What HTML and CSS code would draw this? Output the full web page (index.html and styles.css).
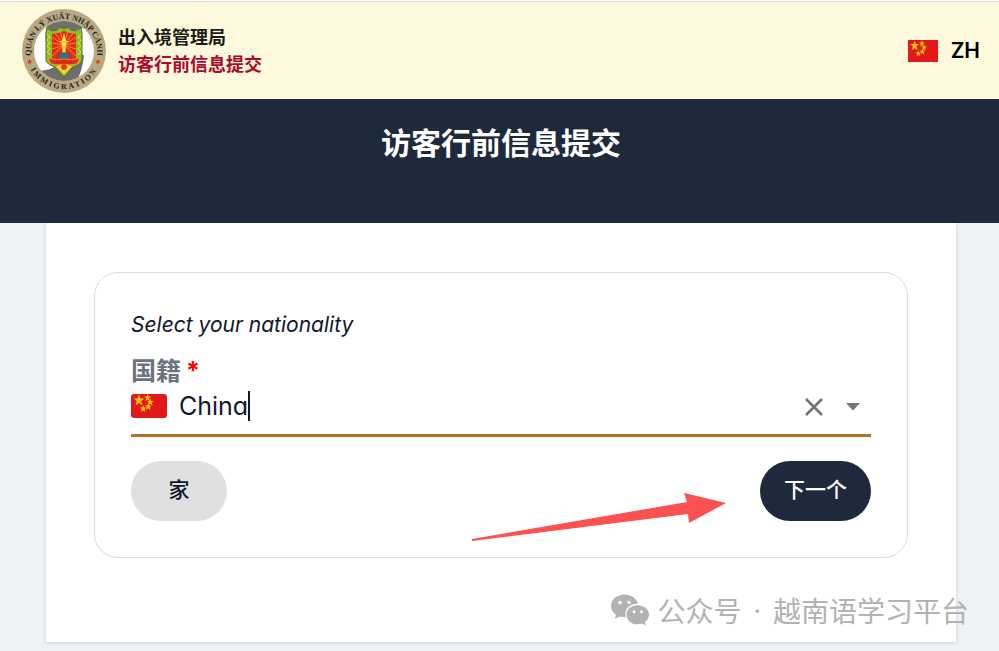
FILE: index.html
```html
<!DOCTYPE html>
<html lang="zh">
<head>
    <meta charset="UTF-8">
    <meta name="viewport" content="width=device-width, initial-scale=1">
    <title>访客行前信息提交</title>
    <link rel="stylesheet" href="styles.css">
</head>
<body>
    <!-- shared flag drawing -->
    <svg class="sprite" aria-hidden="true">
        <symbol id="flag" viewBox="0 0 36 24" preserveAspectRatio="none">
            <rect width="36" height="24" fill="#e2191a"/>
            <g fill="#ffc60a">
                <path id="star" d="M8 0.5 L9.4 4.4 L13.4 4.4 L10.2 6.9 L11.5 11.4 L8 8.8 L4.5 11.4 L5.8 6.9 L2.6 4.4 L6.6 4.4 Z"/>
                <use href="#star" transform="translate(11.6 -0.2) scale(.64)"/>
                <use href="#star" transform="translate(14.2 4.2) scale(.64)"/>
                <use href="#star" transform="translate(12.2 8.6) scale(.64)"/>
                <use href="#star" transform="translate(7.2 10.8) scale(.64)"/>
            </g>
        </symbol>
    </svg>

    <header class="topbar">
        <a class="brand" href="#">
            <svg class="logo" viewBox="0 0 84 84" aria-hidden="true">
                <defs>
                    <path id="arcTop" d="M10 52 A33.2 33.2 0 1 1 74 52"/>
                    <path id="arcBottom" d="M5 52 A38.4 38.4 0 0 0 79 52"/>
                    <path id="shield" d="M24 24 L25 19 L30 22 Q36 22 38 18 Q42 21 46 18 Q48 22 54 22 L59 19 L60 24 V52 Q58 56 51 58 L42 68 L33 58 Q26 56 24 52 Z"/>
                    <clipPath id="disc"><circle cx="42" cy="42" r="30"/></clipPath>
                </defs>
                <circle cx="42" cy="42" r="42" fill="#b9a981"/>
                <circle cx="42" cy="42" r="30" fill="#fff"/>
                <g clip-path="url(#disc)" fill="#6f6e6c">
                    <path d="M24 34 Q22 20 28 10 H56 L61 19 Q50 20 42 32 Z"/>
                    <path d="M18 62 Q37 60 42 48 L62 46 Q60 66 52 75 H34 Z"/>
                </g>
                <use href="#shield" fill="#8fbe22" stroke="#4d7a24" stroke-width="1"/>
                <path d="M30 25 L36 24 L42 22 L48 24 L54 25 V50 Q52 56 42 62 Q32 56 30 50 Z" fill="#e32a1c"/>
                <path d="M42 36 L30 28 M42 36 L33 24 M42 36 L38 22 M42 36 L46 22 M42 36 L51 24 M42 36 L54 28 M42 36 L54 34 M42 36 L54 40 M42 36 L54 47 M42 36 L30 34 M42 36 L30 40 M42 36 L30 47" stroke="#ffa52a" stroke-width="0.8"/>
                <path d="M42 24 L44 31 L43.5 48 H40.5 L40 31 Z" fill="#ffe44d"/>
                <path d="M37 32 H47 L43 35 H41 Z" fill="#ffd02a"/>
                <path d="M34 47 L42 43 L50 47 L47 49 H37 Z" fill="#376d81"/>
                <path d="M26 49 Q34 52 42 50 Q50 52 58 49 L55 55 Q42 58 29 55 Z" fill="#dc2b20" stroke="#f0a629" stroke-width="0.8"/>
                <path d="M34 57 Q42 53 50 57 L42 66 Z" fill="#f2d72c"/>
                <circle cx="42" cy="58" r="3" fill="#e53a20"/>
                <path d="M25 25 L28 28 L25 31 L28 34 L25 37 L28 40 L25 43 L28 46 M59 25 L56 28 L59 31 L56 34 L59 37 L56 40 L59 43 L56 46" fill="none" stroke="#e8e23a" stroke-width="1"/>
                <g fill="#e03125">
                    <use href="#star" transform="translate(3.6 49.6) scale(.5)"/>
                    <use href="#star" transform="translate(72 49.6) scale(.5)"/>
                </g>
                <text class="logo-text"><textPath href="#arcTop" startOffset="50%" text-anchor="middle">QUẢN LÝ XUẤT NHẬP CẢNH</textPath></text>
                <text class="logo-text wide"><textPath href="#arcBottom" startOffset="50%" text-anchor="middle">IMMIGRATION</textPath></text>
            </svg>
            <span class="brand-text">
                <span>出入境管理局</span>
                <span class="brand-sub">访客行前信息提交</span>
            </span>
        </a>
        <button type="button" class="lang">
            <svg class="lang-flag" aria-hidden="true"><use href="#flag"/></svg>
            ZH
        </button>
    </header>

    <section class="banner">
        <h1>访客行前信息提交</h1>
    </section>

    <main class="panel">
        <form class="card">
            <p class="hint">Select your nationality</p>
            <label class="label" for="nationality">国籍<span class="required">*</span></label>
            <div class="field">
                <svg class="field-flag" aria-hidden="true"><use href="#flag"/></svg>
                <input id="nationality" type="text" value="China" autocomplete="off">
                <span class="caret"></span>
                <div class="field-actions">
                    <button type="button" aria-label="Clear">
                        <svg width="20" height="20" viewBox="0 0 20 20"><path d="M2 2 L18 18 M18 2 L2 18" stroke="#757575" stroke-width="2.6"/></svg>
                    </button>
                    <button type="button" aria-label="Open">
                        <svg width="16" height="8" viewBox="0 0 16 8"><path d="M1 0 H15 L8 7.5 Z" fill="#757575"/></svg>
                    </button>
                </div>
            </div>
            <div class="actions">
                <button type="button" class="btn btn-home">家</button>
                <button type="button" class="btn btn-next">下一个</button>
            </div>
            <svg class="arrow" viewBox="0 0 256 50" aria-hidden="true">
                <path d="M1 47 L216 10 L213 1 L255 11 L218 31 L217 22 L1 49 Z" fill="#fa5151"/>
            </svg>
        </form>
    </main>

    <div class="watermark">
        <svg width="38" height="32" viewBox="0 0 38 32" aria-hidden="true">
            <path d="M13.5 0.5 C6 0.5 0 5.5 0 12 C0 15.5 2 18.7 5 20.9 L3.8 25 L8.5 22.5 Q12 23.5 14.7 23.2 C12.8 15 19 9.5 27 9.8 C25.5 4.2 20 0.5 13.5 0.5 Z" fill="#b2b2b2"/>
            <path d="M26.5 11.2 C20 11.2 15.5 15.5 15.5 20.7 C15.5 26.5 20.5 30.3 26.5 30.3 Q29 30.3 31 29.5 L34.8 31.5 L33.9 28 C36.5 26.2 38 23.5 38 20.7 C38 15.5 33 11.2 26.5 11.2 Z" fill="#b2b2b2"/>
            <g fill="#fff">
                <circle cx="9" cy="8.5" r="1.8"/>
                <circle cx="18" cy="8.5" r="1.8"/>
                <circle cx="23" cy="17.8" r="1.5"/>
                <circle cx="30.5" cy="17.8" r="1.5"/>
            </g>
        </svg>
        <span>公众号</span>
        <span class="dot">·</span>
        <span>越南语学习平台</span>
    </div>
</body>
</html>
```
FILE: styles.css
```css
* {
    box-sizing: border-box;
}

body {
    margin: 0;
    min-height: 100vh;
    position: relative;
    border-top: 1px solid #fff;
    background-color: #eff3f8;
    color: #0f172a;
    font-family: Inter, "Noto Sans CJK SC", sans-serif;
}

button {
    border: none;
    background: none;
    padding: 0;
    color: inherit;
    font-family: inherit;
    cursor: pointer;
}

.sprite {
    position: absolute;
    width: 0;
    height: 0;
}

.topbar {
    display: flex;
    justify-content: space-between;
    align-items: center;
    height: 98px;
    padding: 0 19px 0 22px;
    border-top: 1px solid #dcdcdc;
    background-color: #fef8dc;
}

.brand {
    display: flex;
    align-items: center;
    gap: 12px;
    color: #1c1c16;
    text-decoration: none;
}

.logo {
    width: 84px;
    height: 84px;
}

.logo-text {
    font-family: "Liberation Serif", serif;
    font-size: 8px;
    font-weight: bold;
    fill: #25251f;
}

.wide {
    letter-spacing: 2px;
}

.brand-text {
    display: flex;
    flex-direction: column;
    font-size: 18px;
    line-height: 27px;
    font-weight: 700;
}

.brand-sub {
    color: #ab0a2c;
}

.lang {
    display: flex;
    align-items: center;
    gap: 13px;
    font-size: 21px;
    font-weight: 600;
    color: #000;
}

.lang-flag {
    width: 30px;
    height: 22px;
}

.banner {
    height: 124px;
    padding: 22px 0 0 3px;
    background-color: #1e293b;
    color: #fff;
    text-align: center;
}

.banner h1 {
    margin: 0;
    font-size: 30px;
    line-height: 44px;
    font-weight: 700;
}

.panel {
    margin: 0 43px 0 46px;
    padding: 49px 48px 84px;
    background-color: #fff;
    box-shadow: 0 1px 4px rgba(0, 0, 0, 0.15);
}

.card {
    position: relative;
    padding: 36px;
    border: 1px solid #dcdcdc;
    border-radius: 24px;
}

.hint {
    margin: 0;
    font-size: 21px;
    line-height: 32px;
    font-style: italic;
    font-weight: 400;
    font-feature-settings: "cv11";
}

.label {
    display: block;
    margin-top: 12px;
    font-size: 25px;
    line-height: 36px;
    font-weight: 700;
    color: #6b7280;
}

.required {
    margin-left: 5px;
    color: #f00;
}

.field {
    display: flex;
    align-items: center;
    height: 48px;
    padding-bottom: 12px;
    border-bottom: 3px solid #b36f2e;
}

.field-flag {
    width: 36px;
    height: 24px;
    margin-right: 12px;
    border-radius: 3px;
}

.field input {
    field-sizing: content;
    padding: 0;
    border: none;
    outline: none;
    background: none;
    color: inherit;
    font-family: inherit;
    font-size: 25px;
    font-weight: 400;
    font-feature-settings: "cv11";
}

.caret {
    width: 2px;
    height: 30px;
    background-color: #0f172a;
}

.field-actions {
    display: flex;
    align-items: center;
    gap: 21px;
    margin-left: auto;
    padding: 2px 10px 0 0;
}

.field-actions button,
.field-actions svg {
    display: block;
}

.actions {
    display: flex;
    justify-content: space-between;
    margin-top: 24px;
}

.btn {
    height: 60px;
    padding: 0 24px 6px;
    border-radius: 30px;
    font-size: 21px;
    font-weight: 500;
}

.btn-home {
    min-width: 96px;
    background-color: #e0e0e0;
}

.btn-next {
    min-width: 111px;
    background-color: #1e293b;
    color: #fff;
}

/* pointer towards the next button */
.arrow {
    position: absolute;
    right: 180px;
    bottom: 15px;
    width: 256px;
    height: 50px;
}

.watermark {
    position: absolute;
    right: 30px;
    bottom: 21px;
    display: flex;
    align-items: center;
    gap: 8px;
    color: #b2b2b2;
    font-family: "Noto Sans CJK SC", sans-serif;
    font-size: 28px;
    line-height: 40px;
}

.dot {
    padding: 0 4px;
    font-family: "Noto Sans", sans-serif;
}
```
